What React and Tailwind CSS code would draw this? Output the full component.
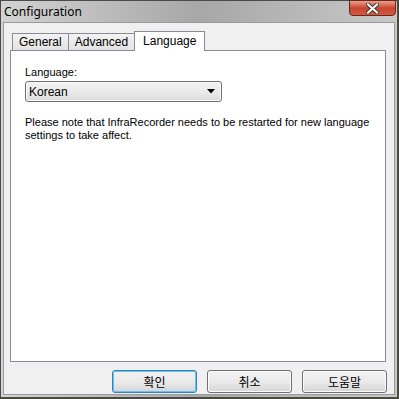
import React from 'react';

const ui = { fontFamily: '"Liberation Sans", Arial, sans-serif' };
const ko = { fontFamily: '"Noto Sans CJK KR", "Liberation Sans", sans-serif' };

const Tab = ({ label, active }) =>
    active ? (
        <div className="relative -ml-[1px] h-[20px] -mb-[1px] px-[8px] pt-[2px] bg-white border border-b-0 border-[#898c95] text-[12px] leading-[15px] text-black z-10" style={ui}>
            {label}
        </div>
    ) : (
        <div className="mt-[2px] h-[17px] px-[6px] bg-gradient-to-b from-[#f3f3f3] to-[#e3e3e3] border border-b-0 border-[#898c95] text-[12px] leading-[16px] text-black -ml-[1px] first:ml-0" style={ui}>
            {label}
        </div>
    );

const Button = ({ label, isDefault }) => (
    <button
        className={`w-[85px] h-[23px] rounded-[3px] border text-[12px] text-black bg-gradient-to-b from-[#f2f2f2] via-[#ebebeb] to-[#d5d5d5] ${isDefault ? 'border-[#3c7fb1] shadow-[inset_0_0_0_1px_#5fc4f7]' : 'border-[#707070] shadow-[inset_0_0_0_1px_#fcfcfc]'}`}
        style={ko}
    >
        {label}
    </button>
);

export default function App() {
    return (
        <div className="w-[399px] h-[399px] bg-[#4a4a3c] overflow-hidden">
            <div className="w-[398px] h-[398px] border border-[#4b4b4b] bg-gradient-to-r from-[#d3d3d3] via-[#a7a7a7] to-[#c8c8c8] flex flex-col">
                {/* title bar */}
                <div className="h-[21px] flex items-start justify-between shrink-0">
                    <div className="pl-[3px] pt-[2px] text-[12px] text-black" style={{ fontFamily: '"Noto Sans", "Liberation Sans", sans-serif' }}>
                        Configuration
                    </div>
                    <div className="mr-[1px] -mt-[1px] w-[47px] h-[16px] rounded-b-[4px] border border-[#6b2418] bg-gradient-to-b from-[#e8a090] via-[#c9452f] to-[#d2593f] flex items-center justify-center">
                        <svg width="13" height="11" viewBox="0 0 13 11">
                            <path d="M2 1.5 L11 9.5 M11 1.5 L2 9.5" stroke="#3a3a3a" strokeWidth="4" strokeLinecap="square" />
                            <path d="M2 1.5 L11 9.5 M11 1.5 L2 9.5" stroke="#ffffff" strokeWidth="2" strokeLinecap="square" />
                        </svg>
                    </div>
                </div>
                {/* client area */}
                <div className="flex-1 mx-[2px] mb-[2px] border border-[#9a9a9a] bg-[#f0f0f0] flex flex-col pl-[6px] pr-[8px] pt-[7px]">
                    <div className="flex items-end pl-[2px] h-[20px]">
                        <Tab label="General" />
                        <Tab label="Advanced" />
                        <Tab label="Language" active />
                    </div>
                    <div className="h-[312px] border border-[#898c95] bg-white pl-[14px] pt-[14px] text-[11px] text-black" style={ui}>
                        <div className="leading-[14px]">Language:</div>
                        <div className="mt-[2px] w-[197px] h-[21px] rounded-[3px] border border-[#707070] bg-gradient-to-b from-[#f2f2f2] via-[#ebebeb] to-[#dcdcdc] flex items-center justify-between pl-[3px] pr-[6px] shadow-[inset_0_0_0_1px_#fbfbfb]">
                            <span className="text-[12px]">Korean</span>
                            <svg width="8" height="5" viewBox="0 0 8 5">
                                <path d="M0 0 H8 L4 4.5 Z" fill="#000" />
                            </svg>
                        </div>
                        <p className="mt-[14px] leading-[13px] text-[11px]">
                            Please note that InfraRecorder needs to be restarted for new language settings to take affect.
                        </p>
                    </div>
                    <div className="flex justify-end gap-[10px] mt-[8px] -mr-[1px]">
                        <Button label="확인" isDefault />
                        <Button label="취소" />
                        <Button label="도움말" />
                    </div>
                </div>
            </div>
        </div>
    );
}
